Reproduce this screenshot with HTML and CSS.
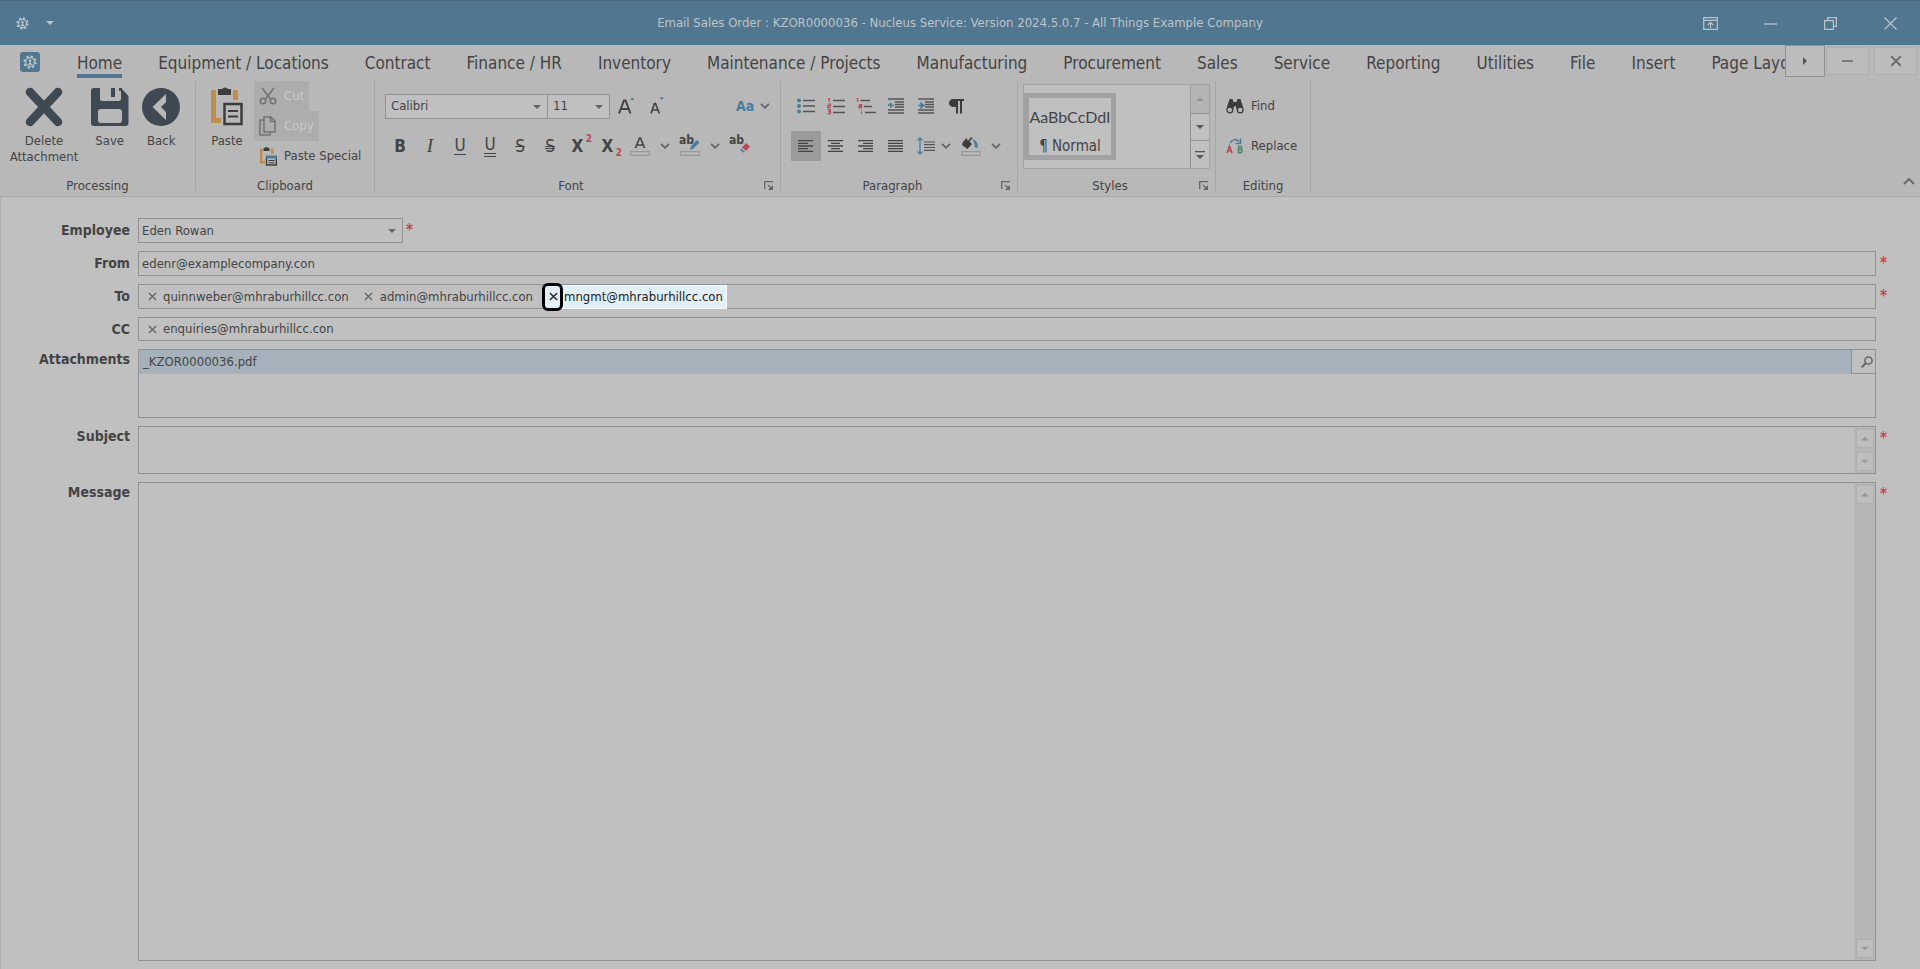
FILE: index.html
```html
<!DOCTYPE html>
<html lang="en">
<head>
<meta charset="utf-8">
<title>Email Sales Order : KZOR0000036</title>
<link rel="stylesheet" href="styles.css">
</head>
<body>
<svg class="defs" aria-hidden="true">
  <symbol id="gear" viewBox="0 0 16 16"><g fill="none" stroke="currentColor"><circle cx="8" cy="8" r="5" stroke-width="1.5"/><circle cx="8" cy="8" r="6.600" stroke-width="2" stroke-dasharray="2.600 2.580"/></g><circle cx="8" cy="6.500" r="1.500" fill="currentColor"/><path d="M5.500 11 8 7.500l2.500 3.500z" fill="currentColor"/></symbol>
  <symbol id="caret" viewBox="0 0 8 4"><path d="M0 0h8L4 4z" fill="currentColor"/></symbol>
  <symbol id="chev" viewBox="0 0 10 6"><path d="M1 .8 5 4.800 9 .8" fill="none" stroke="currentColor" stroke-width="1.800"/></symbol>
  <symbol id="x" viewBox="0 0 10 10"><path d="m1 1 8 8M9 1 1 9" fill="none" stroke="currentColor" stroke-width="1.500"/></symbol>
  <symbol id="launch" viewBox="0 0 10 10"><path d="M.7 8V.7H9" fill="none" stroke="currentColor" stroke-width="1.300"/><path d="m4 4 3 3" stroke="currentColor" stroke-width="1.300"/><path d="M9 4v5H4z" fill="currentColor"/></symbol>
</svg>

<header class="titlebar">
  <div class="quick">
    <button class="plain" aria-label="Application"><svg width="13" height="13"><use href="#gear"/></svg></button>
    <button class="plain" aria-label="Customize quick access"><svg width="8" height="4"><use href="#caret"/></svg></button>
  </div>
  <h1 class="title">Email Sales Order : KZOR0000036 - Nucleus Service: Version 2024.5.0.7 - All Things Example Company</h1>
  <div class="win">
    <button class="plain" aria-label="Ribbon display"><svg width="15" height="13" viewBox="0 0 15 13"><path d="M.7.7h13.600v11.600H.7zM.7 3.300h13.600M7.500 11V5.500M4.800 8l2.700-2.700L10.200 8" fill="none" stroke="currentColor" stroke-width="1.200"/></svg></button>
    <button class="plain" aria-label="Minimize"><svg width="13" height="13" viewBox="0 0 13 13"><path d="M0 7h13" stroke="currentColor" stroke-width="1.300"/></svg></button>
    <button class="plain" aria-label="Restore"><svg width="13" height="13" viewBox="0 0 13 13"><path d="M.6 3.600h8.800v8.800H.6zM3.600 3.500V.6h8.800v8.800h-3" fill="none" stroke="currentColor" stroke-width="1.200"/></svg></button>
    <button class="plain" aria-label="Close"><svg width="13" height="13" viewBox="0 0 13 13"><path d="m.5.5 12 12m0-12-12 12" stroke="currentColor" stroke-width="1.300"/></svg></button>
  </div>
</header>

<div class="tabrow">
  <button class="appbtn" aria-label="Menu"><svg width="14" height="14"><use href="#gear"/></svg></button>
  <nav class="tabs">
    <a href="#" class="tab on">Home</a><a href="#" class="tab">Equipment / Locations</a><a href="#" class="tab">Contract</a><a href="#" class="tab">Finance / HR</a><a href="#" class="tab">Inventory</a><a href="#" class="tab">Maintenance / Projects</a><a href="#" class="tab">Manufacturing</a><a href="#" class="tab">Procurement</a><a href="#" class="tab">Sales</a><a href="#" class="tab">Service</a><a href="#" class="tab">Reporting</a><a href="#" class="tab">Utilities</a><a href="#" class="tab">File</a><a href="#" class="tab">Insert</a><a href="#" class="tab">Page Layout</a>
  </nav>
  <button class="tabscroll" aria-label="Scroll tabs"><svg width="4" height="8" viewBox="0 0 4 8"><path d="M0 0v8l4-4z" fill="currentColor"/></svg></button>
  <div class="docbtns">
    <button class="docbtn" aria-label="Minimize document"><svg width="11" height="10" viewBox="0 0 11 10"><path d="M0 5h11" stroke="currentColor" stroke-width="1.500"/></svg></button>
    <button class="docbtn" aria-label="Close document"><svg width="12" height="12"><use href="#x"/></svg></button>
  </div>
</div>

<div class="ribbon">
  <section class="group processing">
    <div class="body">
      <button class="big wide"><svg width="38" height="40" viewBox="0 0 38 40"><path d="m5 5 28 30M33 5 5 35" stroke="#3f4954" stroke-width="8.500" stroke-linecap="round"/></svg><span>Delete<br>Attachment</span></button>
      <button class="big"><svg width="38" height="40" viewBox="0 0 38 40"><path fill="#3f4954" fill-rule="evenodd" d="M3 1h6v11q0 2 2 2h17q2 0 2-2V1l7.500 8V36q0 3-3 3H3q-3 0-3-3V4q0-3 3-3zM10 22q-3 0-3 3v8q0 3 3 3h18q3 0 3-3v-8q0-3-3-3z"/><path d="M20 1h4v9h-4z" fill="#3f4954"/><path d="M28 1h3v3h-3z" fill="#3f4954"/></svg><span>Save</span></button>
      <button class="big"><svg width="38" height="40" viewBox="0 0 38 40"><circle cx="19" cy="20" r="19" fill="#3f4954"/><path d="M24 7v8l-5 5 5 5v8L10.500 20z" fill="#b8b8b8"/></svg><span>Back</span></button>
    </div>
    <h2 class="gname">Processing</h2>
  </section>

  <section class="group clipboard">
    <div class="body">
      <button class="big"><svg width="34" height="40" viewBox="0 0 34 40"><path d="M1 3h5v28h5v5H1zM23 3h5v10h-5z" fill="#c08c4c"/><path d="M8 2h4q3-3 6 0h3v6H8z" fill="#3c3c3c"/><path d="M14.500 17h17v20h-17z" fill="#b8b8b8" stroke="#3c3c3c" stroke-width="2.500"/><path d="M18 24h10M18 29.500h10" stroke="#3c3c3c" stroke-width="2"/></svg><span>Paste</span></button>
      <div class="stack">
        <button class="item off" disabled><svg width="18" height="18" viewBox="0 0 18 18" fill="none" stroke="#737373" stroke-width="1.600"><path d="m3 1 8.500 11M15 1 6.500 12"/><circle cx="4" cy="14" r="2.700"/><circle cx="14" cy="14" r="2.700"/></svg>Cut</button>
        <button class="item off" disabled><svg width="18" height="20" viewBox="0 0 18 20" fill="none" stroke="#737373" stroke-width="1.500"><path d="M5 4H1v15h10v-3M5 1h7l4 4v11H5zM11.500 1v4.500H16"/></svg>Copy</button>
        <button class="item"><svg width="18" height="19" viewBox="0 0 18 19"><path d="M1 1.500h2.500V14H6v2.500H1zM12 1.500h2.500V7H12z" fill="#c08c4c"/><path d="M4.500 1.500Q7.500-1 10.500 1.500V4h-6z" fill="#3c3c3c"/><path d="M7.500 10h9.800v8H7.500z" fill="none" stroke="#3c3c3c" stroke-width="1.400"/><path d="M7 8.500h11v3H7z" fill="#4a7c9c"/><path d="M9.500 13.500h6M9.500 15.800h6" stroke="#3c3c3c"/></svg>Paste Special</button>
      </div>
    </div>
    <h2 class="gname">Clipboard</h2>
  </section>

  <section class="group font">
    <div class="body rows">
      <div class="row">
        <div class="combo family"><select aria-label="Font"><option>Calibri</option></select><svg width="8" height="4"><use href="#caret"/></svg></div>
        <div class="combo size"><select aria-label="Font size"><option>11</option></select><svg width="8" height="4"><use href="#caret"/></svg></div>
        <button class="tool" aria-label="Grow font"><svg width="18" height="20" viewBox="0 0 18 20"><path d="M2 17.500 7 4.500h1.500l5 13M3.800 13h7.800" fill="none" stroke="#444" stroke-width="2"/><path d="m13 4 2.200-2.500L17.400 4z" fill="#4a7c9c"/></svg></button>
        <button class="tool" aria-label="Shrink font"><svg width="18" height="20" viewBox="0 0 18 20"><path d="M4 17.500 7.500 7.500h1l3.800 10M5.500 14h5.500" fill="none" stroke="#444" stroke-width="1.700"/><path d="m12.500 1.500 2.200 2.500 2.200-2.500z" fill="#4a7c9c"/></svg></button>
        <button class="case" aria-label="Change case"><b>Aa</b><svg width="10" height="6"><use href="#chev"/></svg></button>
      </div>
      <div class="row">
        <button class="tool glyph"><b>B</b></button>
        <button class="tool glyph"><i class="serif">I</i></button>
        <button class="tool glyph"><span class="u">U</span></button>
        <button class="tool glyph"><span class="uu">U</span></button>
        <button class="tool glyph"><s>S</s></button>
        <button class="tool glyph"><s class="dbl">S</s></button>
        <button class="tool glyph"><b>X</b><sup>2</sup></button>
        <button class="tool glyph"><b>X</b><sub>2</sub></button>
        <button class="tool" aria-label="Font color"><svg width="20" height="20" viewBox="0 0 20 20"><path d="M5.500 12 9.500 2h1l4 10M7 9h6" fill="none" stroke="#444" stroke-width="1.700"/><path d="M.7 15.700h18.600v3.600H.7z" fill="none" stroke="#999" stroke-width="1.200"/></svg></button>
        <button class="drop" aria-label="Font color options"><svg width="10" height="6"><use href="#chev"/></svg></button>
        <button class="tool mark" aria-label="Highlight"><span class="ab">ab</span><svg width="20" height="20" viewBox="0 0 20 20"><path d="M.7 15.700h18.600v3.600H.7z" fill="none" stroke="#999" stroke-width="1.200"/><path d="m10 14 1-4 6-6 2.500 2.500-6 6z" fill="#4a7c9c"/></svg></button>
        <button class="drop" aria-label="Highlight options"><svg width="10" height="6"><use href="#chev"/></svg></button>
        <button class="tool mark" aria-label="Clear formatting"><span class="ab">ab</span><svg width="20" height="20" viewBox="0 0 20 20"><path d="m12 11.500 4-4.500 4 3.500-4 4.500z" fill="#bf4454"/><path d="m11 12.500 4 3.500-2 .5-2.800-2.500z" fill="#4a7c9c"/></svg></button>
      </div>
    </div>
    <h2 class="gname">Font</h2>
    <button class="launcher" aria-label="Font settings"><svg width="10" height="10"><use href="#launch"/></svg></button>
  </section>

  <section class="group para">
    <div class="body rows">
      <div class="row">
        <button class="tool" aria-label="Bullets"><svg width="18" height="16" viewBox="0 0 18 16"><g fill="#4a7c9c"><circle cx="2" cy="2.500" r="2"/><circle cx="2" cy="8" r="2"/><circle cx="2" cy="13.500" r="2"/></g><path d="M6 2.500h12M6 8h12M6 13.500h12" stroke="#555" stroke-width="1.300"/></svg></button>
        <button class="tool" aria-label="Numbering"><svg width="18" height="18" viewBox="0 0 18 18"><path d="M1 1.500h1.200V5M.6 7h2.800v1.800H.8v1.800h2.800M.6 12.700h2.800v4H.6M1 14.700h2.400" fill="none" stroke="#bf4454" stroke-width="1.200"/><path d="M6 3.500h12M6 9.500h12M6 15.500h12" stroke="#555" stroke-width="1.300"/></svg></button>
        <button class="tool" aria-label="Multilevel list"><svg width="20" height="18" viewBox="0 0 20 18"><path d="M.5 1.500h1.200V5M3 7.700h2.600v3H3V9.200h2.600M5.500 12.500v1M5.500 14.500V17" fill="none" stroke="#bf4454" stroke-width="1.200"/><path d="M4.500 3.500H14M8 9.500h8M9 15.500h11" stroke="#555" stroke-width="1.300"/></svg></button>
        <button class="tool" aria-label="Decrease indent"><svg width="16" height="16" viewBox="0 0 16 16"><path d="M0 1h16M7 4h9M7 6.500h9M7 9h9M0 12h16M0 15h16" stroke="#555" stroke-width="1.300"/><path d="M0 7.500h6M3 5v5M0 7.500 3 5" stroke="#4a7c9c" stroke-width="1.300" fill="none"/></svg></button>
        <button class="tool" aria-label="Increase indent"><svg width="16" height="16" viewBox="0 0 16 16"><path d="M0 1h16M7 4h9M7 6.500h9M7 9h9M0 12h16M0 15h16" stroke="#555" stroke-width="1.300"/><path d="M0 7.500h6M3 5v5l3-2.500z" stroke="#4a7c9c" stroke-width="1.300" fill="none"/></svg></button>
        <button class="tool" aria-label="Show paragraph marks"><svg width="16" height="16" viewBox="0 0 16 16"><path d="M8 9H5Q1 8.500 1 5t4-4h11v2h-2v12.500h-2V3h-2v12.500H8z" fill="#3c3c3c"/></svg></button>
      </div>
      <div class="row">
        <button class="tool pressed" aria-label="Align left"><svg width="16" height="12" viewBox="0 0 16 12"><path d="M0 .7h15M0 3.300h10M0 6h15M0 8.700h10M0 11.300h15" stroke="#444" stroke-width="1.300"/></svg></button>
        <button class="tool" aria-label="Center"><svg width="16" height="12" viewBox="0 0 16 12"><path d="M0 .7h15M3 3.300h9M0 6h15M3 8.700h9M0 11.300h15" stroke="#444" stroke-width="1.300"/></svg></button>
        <button class="tool" aria-label="Align right"><svg width="16" height="12" viewBox="0 0 16 12"><path d="M0 .7h15M5 3.300h10M0 6h15M5 8.700h10M0 11.300h15" stroke="#444" stroke-width="1.300"/></svg></button>
        <button class="tool" aria-label="Justify"><svg width="16" height="12" viewBox="0 0 16 12"><path d="M0 .7h15M0 3.300h15M0 6h15M0 8.700h15M0 11.300h15" stroke="#444" stroke-width="1.300"/></svg></button>
        <button class="tool" aria-label="Line spacing"><svg width="18" height="18" viewBox="0 0 18 18"><path d="M3 1v16M.5 3.500 3 1l2.500 2.500M.5 14.500 3 17l2.500-2.500" stroke="#4a7c9c" stroke-width="1.300" fill="none"/><path d="M7 5h11M7 7.700h11M7 10.500h11M7 13.300h11" stroke="#555" stroke-width="1.200"/></svg></button>
        <button class="drop narrow" aria-label="Line spacing options"><svg width="10" height="6"><use href="#chev"/></svg></button>
        <button class="tool" aria-label="Shading"><svg width="20" height="20" viewBox="0 0 20 20"><path d="m2 6 3.500-4 1.500 3 3-4 1.500 1-3 3.500L11 8l-4.500 5L1 9z" fill="#3c3c3c"/><path d="M11 3q6 1 6 9l-3.500-1Q14 6 11 3z" fill="#4a7c9c"/><path d="M.7 15.700h18.600v3.600H.7z" fill="none" stroke="#999" stroke-width="1.200"/></svg></button>
        <button class="drop" aria-label="Shading options"><svg width="10" height="6"><use href="#chev"/></svg></button>
      </div>
    </div>
    <h2 class="gname">Paragraph</h2>
    <button class="launcher" aria-label="Paragraph settings"><svg width="10" height="10"><use href="#launch"/></svg></button>
  </section>

  <section class="group styles">
    <div class="body">
      <div class="gallery">
        <button class="style"><span class="sample">AaBbCcDdI</span><span class="sname">¶ Normal</span></button>
        <div class="gscroll">
          <button class="dim" aria-label="Previous styles"><svg width="8" height="4" viewBox="0 0 8 4"><path d="M0 4h8L4 0z" fill="currentColor"/></svg></button>
          <button aria-label="Next styles"><svg width="8" height="4"><use href="#caret"/></svg></button>
          <button aria-label="All styles"><svg width="10" height="8" viewBox="0 0 10 8"><path d="M0 0h10v1.300H0zM1 4h8L5 8z" fill="currentColor"/></svg></button>
        </div>
      </div>
    </div>
    <h2 class="gname">Styles</h2>
    <button class="launcher" aria-label="Styles settings"><svg width="10" height="10"><use href="#launch"/></svg></button>
  </section>

  <section class="group editing">
    <div class="body rows">
      <button class="item"><svg width="18" height="16" viewBox="0 0 18 16"><path d="M3.500 1h3l1 3h3l1-3h3L17 9v3H11L9.500 8h-1L7 12H1V9z" fill="#3c3c3c"/><g fill="#b8b8b8" stroke="#3c3c3c" stroke-width="1.300"><circle cx="3.800" cy="12" r="2.900"/><circle cx="14.200" cy="12" r="2.900"/></g></svg>Find</button>
      <button class="item"><svg width="18" height="16" viewBox="0 0 18 16"><path d="m1 15 2.500-7L6 15M2 12.700h3" fill="none" stroke="#bf4454" stroke-width="1.500"/><path d="M12.500 8.500H15q1.500 1.500 0 3h-2.500H15q2 1.500 0 3.200h-2.500z" fill="none" stroke="#4d8560" stroke-width="1.500"/><path d="M4 5q4-6 9-1.500M14.500.5v5h-5" fill="none" stroke="#4a7c9c" stroke-width="1.500"/></svg>Replace</button>
    </div>
    <h2 class="gname">Editing</h2>
  </section>
  <button class="collapse" aria-label="Collapse ribbon"><svg width="12" height="8" viewBox="0 0 12 8"><path d="m1 7 5-5 5 5" fill="none" stroke="currentColor" stroke-width="1.800"/></svg></button>
</div>

<main class="form">
  <label for="employee">Employee</label>
  <div class="short"><div class="combo"><select id="employee"><option>Eden Rowan</option></select><svg width="8" height="4"><use href="#caret"/></svg></div><span class="req">*</span></div>

  <label for="from">From</label>
  <input id="from" class="box" type="text" value="edenr@examplecompany.con">
  <span class="req">*</span>

  <label for="to">To</label>
  <div class="box chips">
    <span class="chip"><button aria-label="Remove"><svg width="9" height="9"><use href="#x"/></svg></button>quinnweber@mhraburhillcc.con</span>
    <span class="chip"><button aria-label="Remove"><svg width="9" height="9"><use href="#x"/></svg></button>admin@mhraburhillcc.con</span>
    <span class="chip hot"><button aria-label="Remove"><svg width="9" height="9"><use href="#x"/></svg></button>mngmt@mhraburhillcc.con</span>
    <input id="to" type="text">
  </div>
  <span class="req">*</span>

  <label for="cc">CC</label>
  <div class="box chips">
    <span class="chip"><button aria-label="Remove"><svg width="9" height="9"><use href="#x"/></svg></button>enquiries@mhraburhillcc.con</span>
    <input id="cc" type="text">
  </div>
  <span></span>

  <label id="attlabel" for="attsearch">Attachments</label>
  <div class="box attach">
    <ul aria-labelledby="attlabel"><li>_KZOR0000036.pdf</li></ul>
    <button id="attsearch" class="search"><svg width="12" height="12" viewBox="0 0 12 12"><circle cx="7.500" cy="4.500" r="3.600" fill="none" stroke="currentColor" stroke-width="1.500"/><path d="M5 7 .7 11.300" stroke="currentColor" stroke-width="2"/></svg></button>
  </div>
  <span></span>

  <label for="subject">Subject</label>
  <div class="box area">
    <textarea id="subject"></textarea>
    <div class="scroll"><button aria-label="Scroll up"><svg width="8" height="5" viewBox="0 0 8 4"><path d="M0 4h8L4 0z" fill="currentColor"/></svg></button><button aria-label="Scroll down"><svg width="8" height="5" viewBox="0 0 8 4"><use href="#caret"/></svg></button></div>
  </div>
  <span class="req">*</span>

  <label for="message">Message</label>
  <div class="box area">
    <textarea id="message"></textarea>
    <div class="scroll"><button aria-label="Scroll up"><svg width="8" height="5" viewBox="0 0 8 4"><path d="M0 4h8L4 0z" fill="currentColor"/></svg></button><button aria-label="Scroll down"><svg width="8" height="5" viewBox="0 0 8 4"><use href="#caret"/></svg></button></div>
  </div>
  <span class="req">*</span>
</main>
</body>
</html>
```
FILE: styles.css
```css
* { box-sizing: border-box; }
body {
  margin: 0;
  min-height: 100vh;
  display: flex;
  flex-direction: column;
  background: #c0c0c0;
  color: #444;
  font: 13px/16px "DejaVu Sans Condensed", "DejaVu Sans", "Noto Sans", sans-serif;
}
button, input, select, textarea {
  font: inherit;
  color: inherit;
  background: none;
  border: 0;
  border-radius: 0;
  padding: 0;
  margin: 0;
  outline: 0;
}
svg { display: block; flex: none; }
h1, h2 { font: inherit; margin: 0; }
.defs { position: absolute; width: 0; height: 0; }

.titlebar {
  height: 45px;
  display: grid;
  grid-template-columns: 1fr auto 1fr;
  align-items: center;
  background: #51768f;
  border-top: 1px solid #4a6a80;
  color: #bcc4c9;
}
.quick { display: flex; align-items: center; gap: 17px; padding-left: 16px; }
.win { display: flex; justify-content: flex-end; }
.win .plain { width: 60px; height: 44px; display: grid; place-items: center; }

.tabrow { display: flex; background: #b8b8b8; height: 36px; padding-left: 20px; }
.appbtn {
  width: 20px;
  height: 20px;
  margin: 7px 19px 0 0;
  display: grid;
  place-items: center;
  background: #51768f;
  color: #bcc4c9;
  border-radius: 3px;
}
.tabs { flex: 1; min-width: 0; overflow: hidden; display: flex; }
.tab {
  padding: 7px 0 0;
  margin: 0 18px;
  height: 33px;
  flex: none;
  font-size: 17px;
  line-height: 22px;
  color: #444;
  text-decoration: none;
  white-space: nowrap;
}
.tab.on { border-bottom: 4px solid #51768f; }
.tabscroll { width: 40px; height: 32px; border: 1px solid #929292; background: #bcbcbc; color: #555; display: grid; place-items: center; }
.docbtns { display: flex; gap: 5px; padding: 2px 3px 0 1px; }
.docbtn { width: 43px; height: 28px; display: grid; place-items: center; background: #bcbcbc; border: 1px solid #aeaeae; color: #666; }

.ribbon { display: flex; height: 116px; background: #b8b8b8; border-bottom: 1px solid #a9a9a9; padding-bottom: 5px; position: relative; }
.group { position: relative; display: flex; flex-direction: column; border-right: 1px solid #a6a6a6; }
.body { flex: 1; display: flex; }
.gname { text-align: center; line-height: 18px; margin-bottom: -4px; }
.font .gname, .para .gname, .styles .gname { padding-right: 13px; }
.launcher { position: absolute; right: 6px; bottom: 0; color: #666; }
.processing { width: 196px; }
.processing .body { padding: 6px 8px 0; }
.clipboard { width: 179px; }
.clipboard .big { width: 46px; margin: 6px 4px 0 8px; }
.font { width: 406px; }
.para { width: 237px; }
.styles { width: 198px; }
.editing { width: 95px; }
.big { display: flex; flex-direction: column; align-items: center; width: 53px; gap: 6px; align-self: flex-start; }
.big.wide { width: 74px; margin-right: 4px; }
.stack { display: flex; flex-direction: column; align-items: flex-start; }
.item { display: flex; align-items: center; gap: 7px; height: 30px; padding: 0 5px; white-space: nowrap; }
.item.off { background: #adadad; color: #c9c9c9; }
.rows { flex-direction: column; gap: 10px; padding: 10px 0 0 10px; }
.editing .item { padding: 0; height: 30px; }
.row { display: flex; height: 30px; align-items: center; }
.tool { position: relative; width: 30px; height: 30px; display: grid; place-items: center; }
.pressed { background: #9b9b9b; }
.drop { width: 20px; height: 30px; display: grid; place-items: center; color: #666; }
.narrow { width: 10px; margin-right: 5px; }
.glyph { font-size: 17px; line-height: 20px; }
.serif { font-family: "Liberation Serif", serif; font-size: 19px; }
.u { border-bottom: 1px solid #444; line-height: 17px; }
.uu { border-bottom: 4px double #444; line-height: 17px; }
.dbl { text-decoration-style: double; }
.glyph sup, .glyph sub { position: absolute; right: 3px; font-size: 10px; font-weight: bold; line-height: 10px; color: #bf4454; }
.glyph:has(sup) b, .glyph:has(sub) b { margin-right: 5px; }
.glyph sup { top: 3px; }
.glyph sub { bottom: 3px; }
.ab { position: absolute; left: 4px; top: 1px; font-size: 12px; font-weight: bold; }
.case { display: flex; align-items: center; gap: 6px; margin-left: 65px; font-size: 14px; color: #666; }
.case b { color: #4a7c9c; }

.combo { position: relative; height: 25px; border: 1px solid #929292; background: #c0c0c0; color: #444; }
.combo select { width: 100%; height: 100%; padding: 0 20px 0 3px; appearance: none; }
.combo svg { position: absolute; right: 6px; top: 10px; color: #666; pointer-events: none; }
.family { width: 163px; }
.family select, .size select { padding-left: 5px; }
.size { width: 62px; border-left: 0; margin-right: 1px; }

.gallery { flex: 1; display: flex; height: 85px; margin: 3px 5px 0; border: 1px solid #a2a2a2; background: #c0c0c0; }
.style { width: 92px; height: 67px; align-self: center; border: 5px solid #a2a2a2; overflow: hidden; display: flex; flex-direction: column; align-items: center; justify-content: flex-end; gap: 10px; }
.sample { font-family: Lato, sans-serif; font-size: 16px; line-height: 20px; }
.sname { font-size: 15px; line-height: 18px; }
.gscroll { margin-left: auto; width: 19px; display: grid; grid-template-rows: 1fr 1fr 1fr; }
.gscroll button { display: grid; place-items: center; border: 1px solid #929292; border-width: 1px 0 0 1px; color: #555; }
.gscroll .dim { background: #b4b4b4; color: #999; border-color: #a2a2a2; border-top: 0; }
.collapse { position: absolute; right: 5px; bottom: 11px; color: #666; }

.form {
  flex: 1;
  display: grid;
  grid-template-columns: 129px 1fr 30px;
  grid-template-rows: 25px 25px 25px 24px 69px 48px 1fr;
  gap: 8px;
  padding: 21px 6px 8px 0;
  border-left: 1px solid #b2b2b2;
}
.form label { font-size: 14px; font-weight: bold; text-align: right; line-height: 24px; }
.form > label:nth-of-type(n + 5) { line-height: 20px; }
.req { color: #c44848; font-size: 15px; font-weight: bold; line-height: 24px; margin-left: -4px; }
.short { grid-column: 2 / 4; display: flex; gap: 7px; }
.short .combo { width: 265px; }
.box { border: 1px solid #929292; min-width: 0; }
input.box { padding: 0 3px; width: 100%; }
.chips { display: flex; align-items: center; gap: 12px; padding-left: 5px; }
.chips input { flex: 1; min-width: 0; }
.chip { position: relative; display: flex; align-items: center; height: 22px; }
.chip button { width: 19px; height: 22px; padding-right: 3px; display: grid; place-items: center; color: #666; }
.hot { background: #e2f0f9; color: #1c2024; box-shadow: 0 0 0 1px #f6fafc; padding-right: 3px; }
.hot button { position: relative; color: #222; }
.hot button::after { content: ""; position: absolute; inset: -3px 1px -3px -3px; border: 3px solid #000; border-radius: 6px; }
.attach { display: flex; align-items: flex-start; }
.attach ul { flex: 1; margin: 0; padding: 0 4px; list-style: none; background: #a5b2bc; line-height: 24px; }
.search { width: 24px; height: 24px; border: 1px solid #929292; border-width: 0 0 1px 1px; display: grid; place-items: center end; padding-right: 2px; color: #666; }
.area { display: flex; }
.area textarea { flex: 1; min-width: 0; resize: none; overflow: hidden; }
.scroll { width: 21px; background: #b6b6b6; display: flex; flex-direction: column; justify-content: space-between; align-items: center; padding: 2px 0; }
.scroll button { width: 18px; height: 19px; display: grid; place-items: center; background: #bebebe; border: 1px solid #b0b0b0; color: #989898; }
```
